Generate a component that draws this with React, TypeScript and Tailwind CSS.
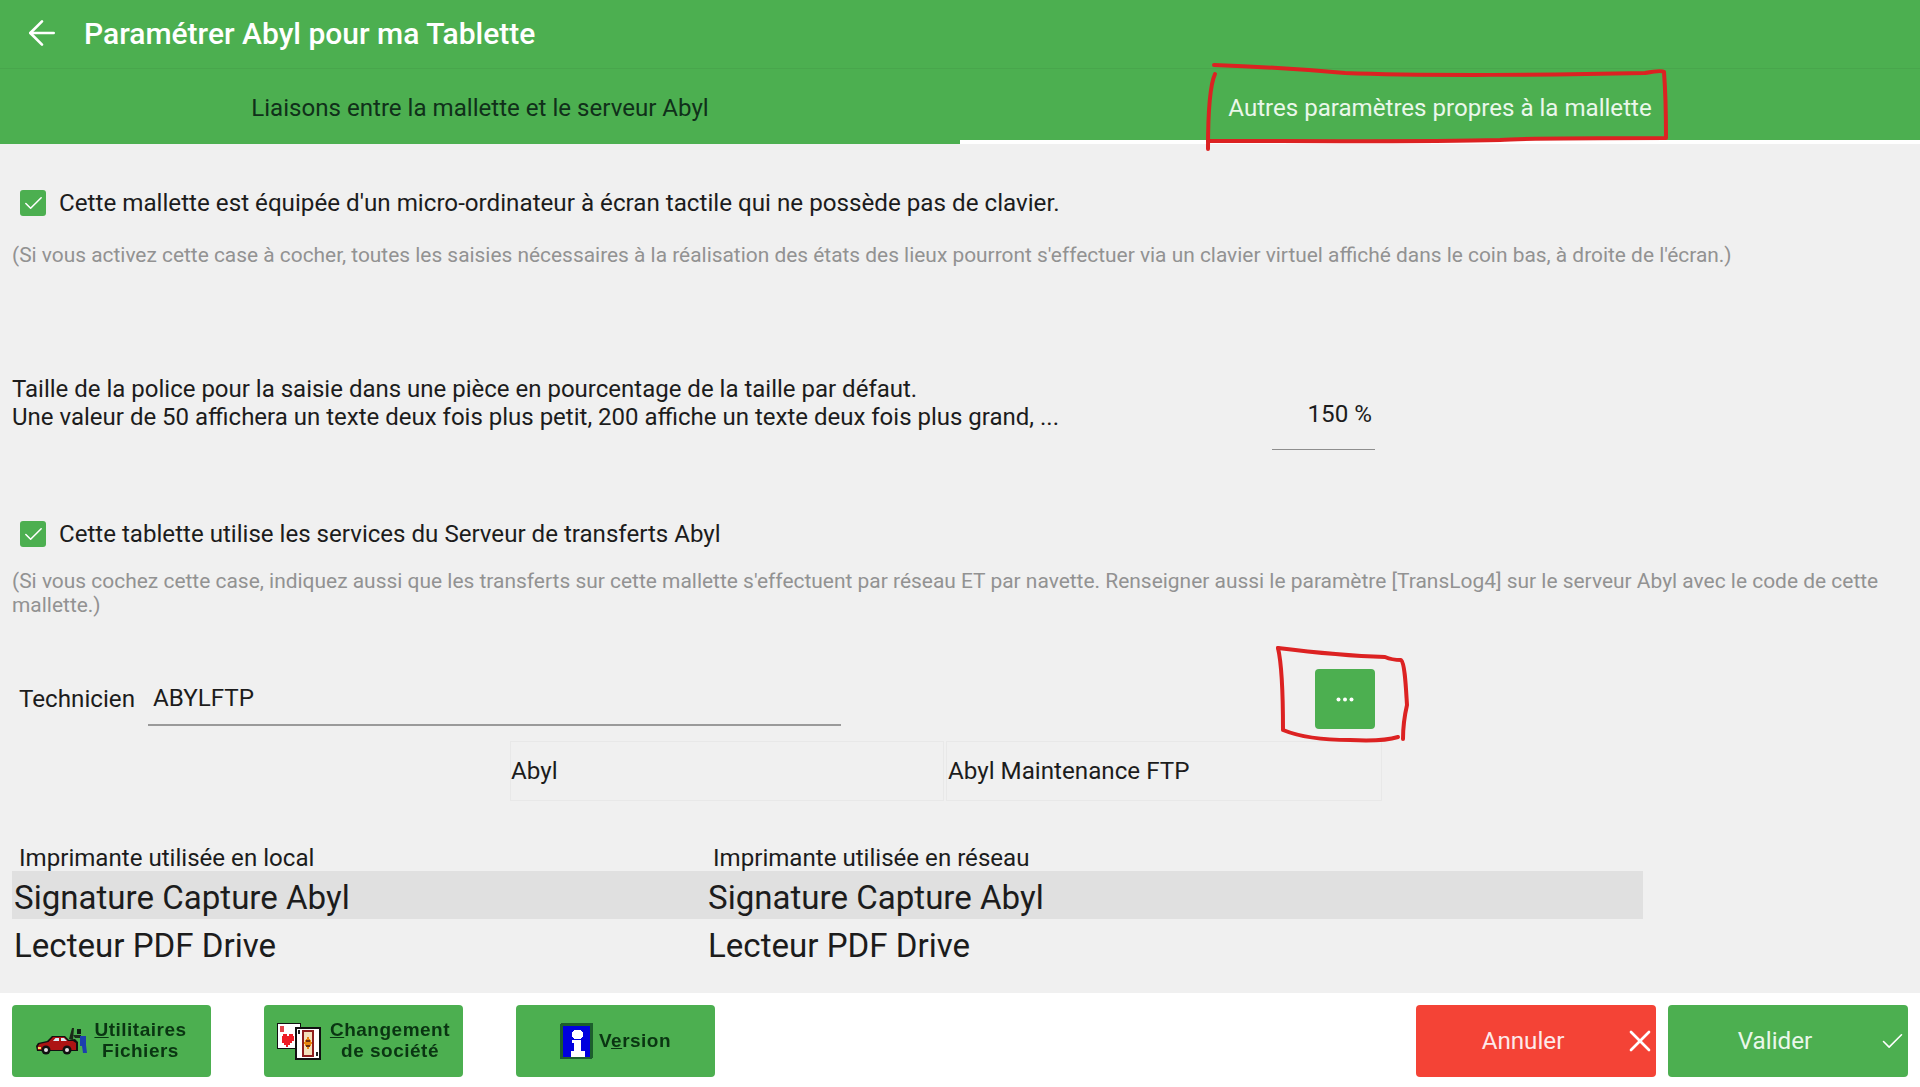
import { ArrowLeft, Check, X } from 'lucide-react';

const roboto = "font-['Roboto',sans-serif]";

function Checkbox() {
  return (
    <span className="flex h-[26px] w-[26px] shrink-0 items-center justify-center rounded-[3px] bg-[#4caf50]">
      <Check size={23} strokeWidth={1.6} className="text-white" />
    </span>
  );
}

function CarIcon() {
  return (
    <svg width="52" height="28" viewBox="0 0 52 28" className="blur-[0.4px]">
      <path d="M0 19l2-3 9-2 5-5h13l4 4 6-1 3 3v9H1z" fill="#111" />
      <path d="M1.5 20l2-3 9-2 4.5-5h11l4 4h5l3 2v7H2z" fill="#ad1414" />
      <path d="M17 14l2.5-3h3.5v3zM25 11h3l3 3h-6z" fill="#dcecf6" />
      <path d="M2 20h3v2H2z" fill="#f0df60" />
      <circle cx="10" cy="23" r="4.5" fill="#111" />
      <circle cx="10" cy="23" r="2" fill="#ddd" />
      <circle cx="31" cy="23" r="4.5" fill="#111" />
      <circle cx="31" cy="23" r="2" fill="#ddd" />
      <path d="M33 12l3-11 2 0-1 12z" fill="#1a2a18" />
      <path d="M37 8h8v3h-6z" fill="#1b2f1d" />
      <path d="M41 2h4v5h-4z" fill="#0f1f14" />
      <path d="M44 9h6v9l1 8h-4l-1-7h-2z" fill="#1c3fae" />
    </svg>
  );
}

function CardsIcon() {
  return (
    <svg width="44" height="37" viewBox="0 0 44 37" shapeRendering="crispEdges" className="blur-[0.4px]">
      <rect x="0.5" y="0.5" width="23" height="25" fill="#fff" stroke="#111" />
      <path d="M5 13h1v-2h4v2h2v-2h4v2h1v5h-2v2h-2v2h-2v2h-2v-2H7v-2H5z" fill="#ee1c25" />
      <path d="M3 3h4v6H3z" fill="#e0454a" />
      <rect x="19" y="5" width="24" height="31" fill="#fff" stroke="#111" strokeWidth="2" />
      <rect x="25" y="7" width="12" height="27" fill="#8f1d1d" />
      <rect x="27" y="9" width="8" height="23" fill="#f3e0bb" />
      <path d="M31 13l4 7-4 7-4-7z" fill="#e8860f" />
      <path d="M29 17h4v2h-4zM29 22h4v2h-4z" fill="#6b2f10" />
      <path d="M21 7h2v4h-2zM39 29h2v4h-2z" fill="#222" />
    </svg>
  );
}

function InfoIcon() {
  return (
    <svg width="33" height="36" viewBox="0 0 33 36" shapeRendering="crispEdges" className="blur-[0.4px]">
      <rect width="33" height="36" rx="2" fill="#1c5f2c" />
      <rect x="3" y="3" width="27" height="31" fill="#0000de" />
      <rect x="12" y="7" width="11" height="9" rx="4" fill="#fff" />
      <path d="M12 17h9v11h4v6H11v-6h3v-8h-2z" fill="#fff" />
    </svg>
  );
}

function LegacyButton({ children, className }: { children: React.ReactNode; className: string }) {
  return (
    <div className={`flex h-[72px] w-[199px] items-center justify-center rounded-[4px] bg-[#4caf50] ${className}`}>
      {children}
    </div>
  );
}

const legacyText =
  "font-['Liberation_Sans',sans-serif] pb-[2px] text-[19px] leading-[21px] font-bold tracking-[0.5px] text-[#0a3512] text-center blur-[0.3px]";

export default function App() {
  return (
    <div className={`relative flex h-[1087px] w-[1920px] flex-col overflow-hidden bg-[#f0f0f0] ${roboto}`}>
      {/* Title */}
      <div className="flex h-[69px] shrink-0 items-center border-b border-[#48a64c] bg-[#4caf50] pb-[2px] pl-[22px] text-white">
        <ArrowLeft size={40} strokeWidth={1.6} />
        <span className="ml-[22px] text-[30px] font-medium">Paramétrer Abyl pour ma Tablette</span>
      </div>

      {/* Tabs */}
      <div className="grid h-[75px] shrink-0 grid-cols-2 bg-[#4caf50] text-[24.1px]">
        <div className="flex items-center justify-center pt-[4px] text-[#10301a]">
          Liaisons entre la mallette et le serveur Abyl
        </div>
        <div className="mb-[4px] flex items-center justify-center pt-[8px] text-[#eaf7ea] shadow-[0_4px_0_#ffffff]">
          Autres paramètres propres à la mallette
        </div>
      </div>

      {/* Settings */}
      <div className="flex min-h-0 flex-1 flex-col px-[12px] text-[24.2px] text-[#1c1c1c]">
        <div className="mt-[46px] flex h-[26px] items-center gap-[13px] pl-[8px]">
          <Checkbox />
          <span>Cette mallette est équipée d'un micro-ordinateur à écran tactile qui ne possède pas de clavier.</span>
        </div>
        <p className="mt-[27px] text-[20.9px] leading-[24px] text-[#929292]">
          (Si vous activez cette case à cocher, toutes les saisies nécessaires à la réalisation des états des lieux pourront s'effectuer via un clavier virtuel affiché dans le coin bas, à droite de l'écran.)
        </p>

        <div className="mt-[108px] flex h-[75px] items-start">
          <p className="w-[1260px] shrink-0 text-[24px] leading-[28px]">
            Taille de la police pour la saisie dans une pièce en pourcentage de la taille par défaut.
            <br />
            Une valeur de 50 affichera un texte deux fois plus petit, 200 affiche un texte deux fois plus grand, ...
          </p>
          <div className="flex h-[75px] w-[103px] items-center justify-end border-b border-[#8e8e8e] pr-[3px] pt-[4px]">
            150 %
          </div>
        </div>

        <div className="mt-[71px] flex h-[26px] items-center gap-[13px] pl-[8px] text-[24.1px]">
          <Checkbox />
          <span>Cette tablette utilise les services du Serveur de transferts Abyl</span>
        </div>
        <p className="mt-[22px] text-[20.95px] leading-[24px] text-[#929292]">
          (Si vous cochez cette case, indiquez aussi que les transferts sur cette mallette s'effectuent par réseau ET par navette. Renseigner aussi le paramètre [TransLog4] sur le serveur Abyl avec le code de cette mallette.)
        </p>

        <div className="mt-[52px] flex h-[60px] items-start">
          <span className="flex h-[60px] w-[136px] shrink-0 items-center pl-[7px]">Technicien</span>
          <div className="flex h-[57px] w-[693px] items-center border-b-2 border-[#9a9a9a] pl-[5px] pt-[4px]">ABYLFTP</div>
          <button className="ml-[474px] flex h-[60px] w-[60px] items-center justify-center rounded-[4px] bg-[#4caf50]">
            <svg width="18" height="5" viewBox="0 0 18 5">
              <circle cx="2.5" cy="2.5" r="2" fill="#fff" />
              <circle cx="9" cy="2.5" r="2" fill="#fff" />
              <circle cx="15.5" cy="2.5" r="2" fill="#fff" />
            </svg>
          </button>
        </div>

        <div className="ml-[498px] mt-[12px] flex h-[60px] gap-[2px]">
          <div className="flex w-[434px] items-center border border-[#e8e8e8]">Abyl</div>
          <div className="flex w-[436px] items-center border border-[#e8e8e8] pl-[1px]">Abyl Maintenance FTP</div>
        </div>

        <div className="mt-[43px] grid h-[27px] w-[1631px] grid-cols-[694px_1fr] items-center pl-[7px] text-[24.1px] leading-[26px]">
          <span>Imprimante utilisée en local</span>
          <span>Imprimante utilisée en réseau</span>
        </div>
        <div className="grid h-[48px] w-[1631px] grid-cols-[694px_1fr] items-center bg-[#e0e0e0] pl-[2px] pt-[2px] text-[33.1px]">
          <span>Signature Capture Abyl</span>
          <span>Signature Capture Abyl</span>
        </div>
        <div className="grid h-[48px] w-[1631px] grid-cols-[694px_1fr] items-center pl-[2px] pt-[2px] text-[33.1px]">
          <span>Lecteur PDF Drive</span>
          <span>Lecteur PDF Drive</span>
        </div>
      </div>

      {/* Bottom bar */}
      <div className="flex h-[94px] shrink-0 items-start bg-white px-[12px] pt-[12px]">
        <LegacyButton className="gap-[6px]">
          <CarIcon />
          <span className={legacyText}>
            <u>U</u>tilitaires
            <br />
            Fichiers
          </span>
        </LegacyButton>
        <LegacyButton className="ml-[53px] gap-[9px]">
          <CardsIcon />
          <span className={legacyText}>
            <u>C</u>hangement
            <br />
            de société
          </span>
        </LegacyButton>
        <LegacyButton className="ml-[53px] gap-[6px]">
          <InfoIcon />
          <span className={legacyText}>
            V<u>e</u>rsion
          </span>
        </LegacyButton>
        <div className="relative ml-auto flex h-[72px] w-[240px] items-center justify-center rounded-[4px] bg-[#f44336] pr-[26px] text-[24.2px] text-[#fdeaea]">
          Annuler
          <X size={36} strokeWidth={1.8} className="absolute right-[-2px] top-[18px] text-white" />
        </div>
        <div className="relative ml-[12px] flex h-[72px] w-[240px] items-center justify-center rounded-[4px] bg-[#4caf50] pr-[26px] text-[24.2px] text-[#eaf7ea]">
          Valider
          <Check size={27} strokeWidth={1.4} className="absolute right-[2px] top-[23px] text-white" />
        </div>
      </div>

      {/* Red pen marks on top of the screenshot */}
      <svg className="pointer-events-none absolute left-0 top-0" width="1920" height="1087" fill="none" stroke="#dc2222" strokeWidth="4" strokeLinecap="round" strokeLinejoin="round">
        <path d="M1214 65 C1270 67 1310 70 1345 73 C1420 76 1560 75 1645 73 C1655 71 1662 70 1664 72 C1665 85 1666 120 1666 138 C1600 138 1530 138 1500 140 C1420 142 1300 141 1208 141" />
        <path d="M1215 74 C1210 85 1208 110 1208 149" />
        <path d="M1278 648 C1310 652 1350 656 1385 657 C1392 660 1398 660 1401 660 C1405 663 1406 690 1407 705 C1404 718 1403 730 1403 739" />
        <path d="M1278 648 C1282 665 1283 690 1283 730 C1300 737 1320 740 1350 740 C1370 741 1385 741 1398 737" />
      </svg>
    </div>
  );
}
